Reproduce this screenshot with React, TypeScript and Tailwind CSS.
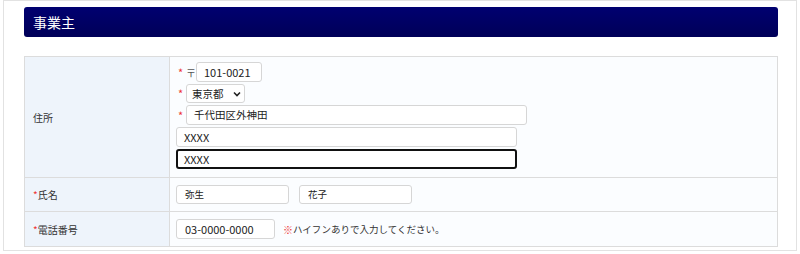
import React from "react";

const font = { fontFamily: '"Noto Sans CJK JP", "Noto Sans", sans-serif' };

function Req() {
  return <span className="w-[8px] text-[11px] text-[#e33] leading-none">*</span>;
}

export default function App() {
  return (
    <div className="w-[800px] h-[254px] bg-white" style={font}>
      <div className="ml-[3px] w-[794px] h-[251px] border border-[#e2e2e2] bg-white pl-[20px] pt-[6px]">
        <div className="w-[754px] h-[30px] rounded-[3px] bg-gradient-to-b from-[#000070] to-[#000058] flex items-center pl-[9px]">
          <span className="text-white text-[14px] font-normal leading-none">事業主</span>
        </div>
        <div className="mt-[19px] w-[754px] border border-[#dcdcdc] text-[#333]">
          {/* 住所 */}
          <div className="flex border-b border-[#dcdcdc] h-[121px]">
            <div className="w-[145px] bg-[#eef4fb] border-r border-[#dcdcdc] flex items-center pl-[8px] text-[10px]">住所</div>
            <div className="flex-1 bg-[#fbfdff] flex flex-col gap-[2px] pt-[5px] pl-[6px]">
              <div className="flex items-center h-[20px]">
                <span className="w-[2px]" />
                <Req />
                <span className="w-[10px] text-[10px] text-[#555]">〒</span>
                <div className="w-[66px] h-[20px] border border-[#d6d6d6] rounded-[3px] bg-white flex items-center pl-[7px] text-[11px] text-[#222]">101-0021</div>
              </div>
              <div className="flex items-center h-[19px]">
                <span className="w-[2px]" />
                <Req />
                <div className="w-[59px] h-[19px] border border-[#d6d6d6] rounded-[3px] bg-white flex items-center justify-between pl-[5px] pr-[3px] text-[10.5px] text-[#222]">
                  <span>東京都</span>
                  <svg width="8" height="6" viewBox="0 0 8 6"><path d="M1 1.5 L4 4.5 L7 1.5" stroke="#222" strokeWidth="1.6" fill="none" /></svg>
                </div>
              </div>
              <div className="flex items-center h-[20px]">
                <span className="w-[2px]" />
                <Req />
                <div className="w-[341px] h-[20px] border border-[#d6d6d6] rounded-[3px] bg-white flex items-center pl-[7px] text-[10.5px] text-[#222]">千代田区外神田</div>
              </div>
              <div className="w-[341px] h-[20px] border border-[#d6d6d6] rounded-[3px] bg-white flex items-center pl-[7px] text-[11px] text-[#222]">XXXX</div>
              <div className="w-[341px] h-[20px] border-2 border-[#111] rounded-[3px] bg-white flex items-center pl-[6px] text-[11px] text-[#222]">XXXX</div>
            </div>
          </div>
          {/* 氏名 */}
          <div className="flex border-b border-[#dcdcdc] h-[34px]">
            <div className="w-[145px] bg-[#eef4fb] border-r border-[#dcdcdc] flex items-center pl-[8px] text-[10px]">
              <span className="text-[#e33] text-[10px]">*</span>氏名
            </div>
            <div className="flex-1 bg-[#fbfdff] flex items-center gap-[10px] pl-[6px]">
              <div className="w-[113px] h-[19px] border border-[#d6d6d6] rounded-[3px] bg-white flex items-center pl-[8px] text-[9.5px] text-[#222]">弥生</div>
              <div className="w-[113px] h-[19px] border border-[#d6d6d6] rounded-[3px] bg-white flex items-center pl-[8px] text-[9.5px] text-[#222]">花子</div>
            </div>
          </div>
          {/* 電話番号 */}
          <div className="flex h-[34px]">
            <div className="w-[145px] bg-[#eef4fb] border-r border-[#dcdcdc] flex items-center pl-[8px] text-[10px]">
              <span className="text-[#e33] text-[10px]">*</span>電話番号
            </div>
            <div className="flex-1 bg-[#fbfdff] flex items-center pl-[6px]">
              <div className="w-[99px] h-[20px] border border-[#d6d6d6] rounded-[3px] bg-white flex items-center pl-[8px] text-[11px] text-[#222]">03-0000-0000</div>
              <span className="ml-[8px] text-[10px] text-[#e33]">※</span>
              <span className="text-[9.5px] text-[#333]">ハイフンありで入力してください。</span>
            </div>
          </div>
        </div>
      </div>
    </div>
  );
}
